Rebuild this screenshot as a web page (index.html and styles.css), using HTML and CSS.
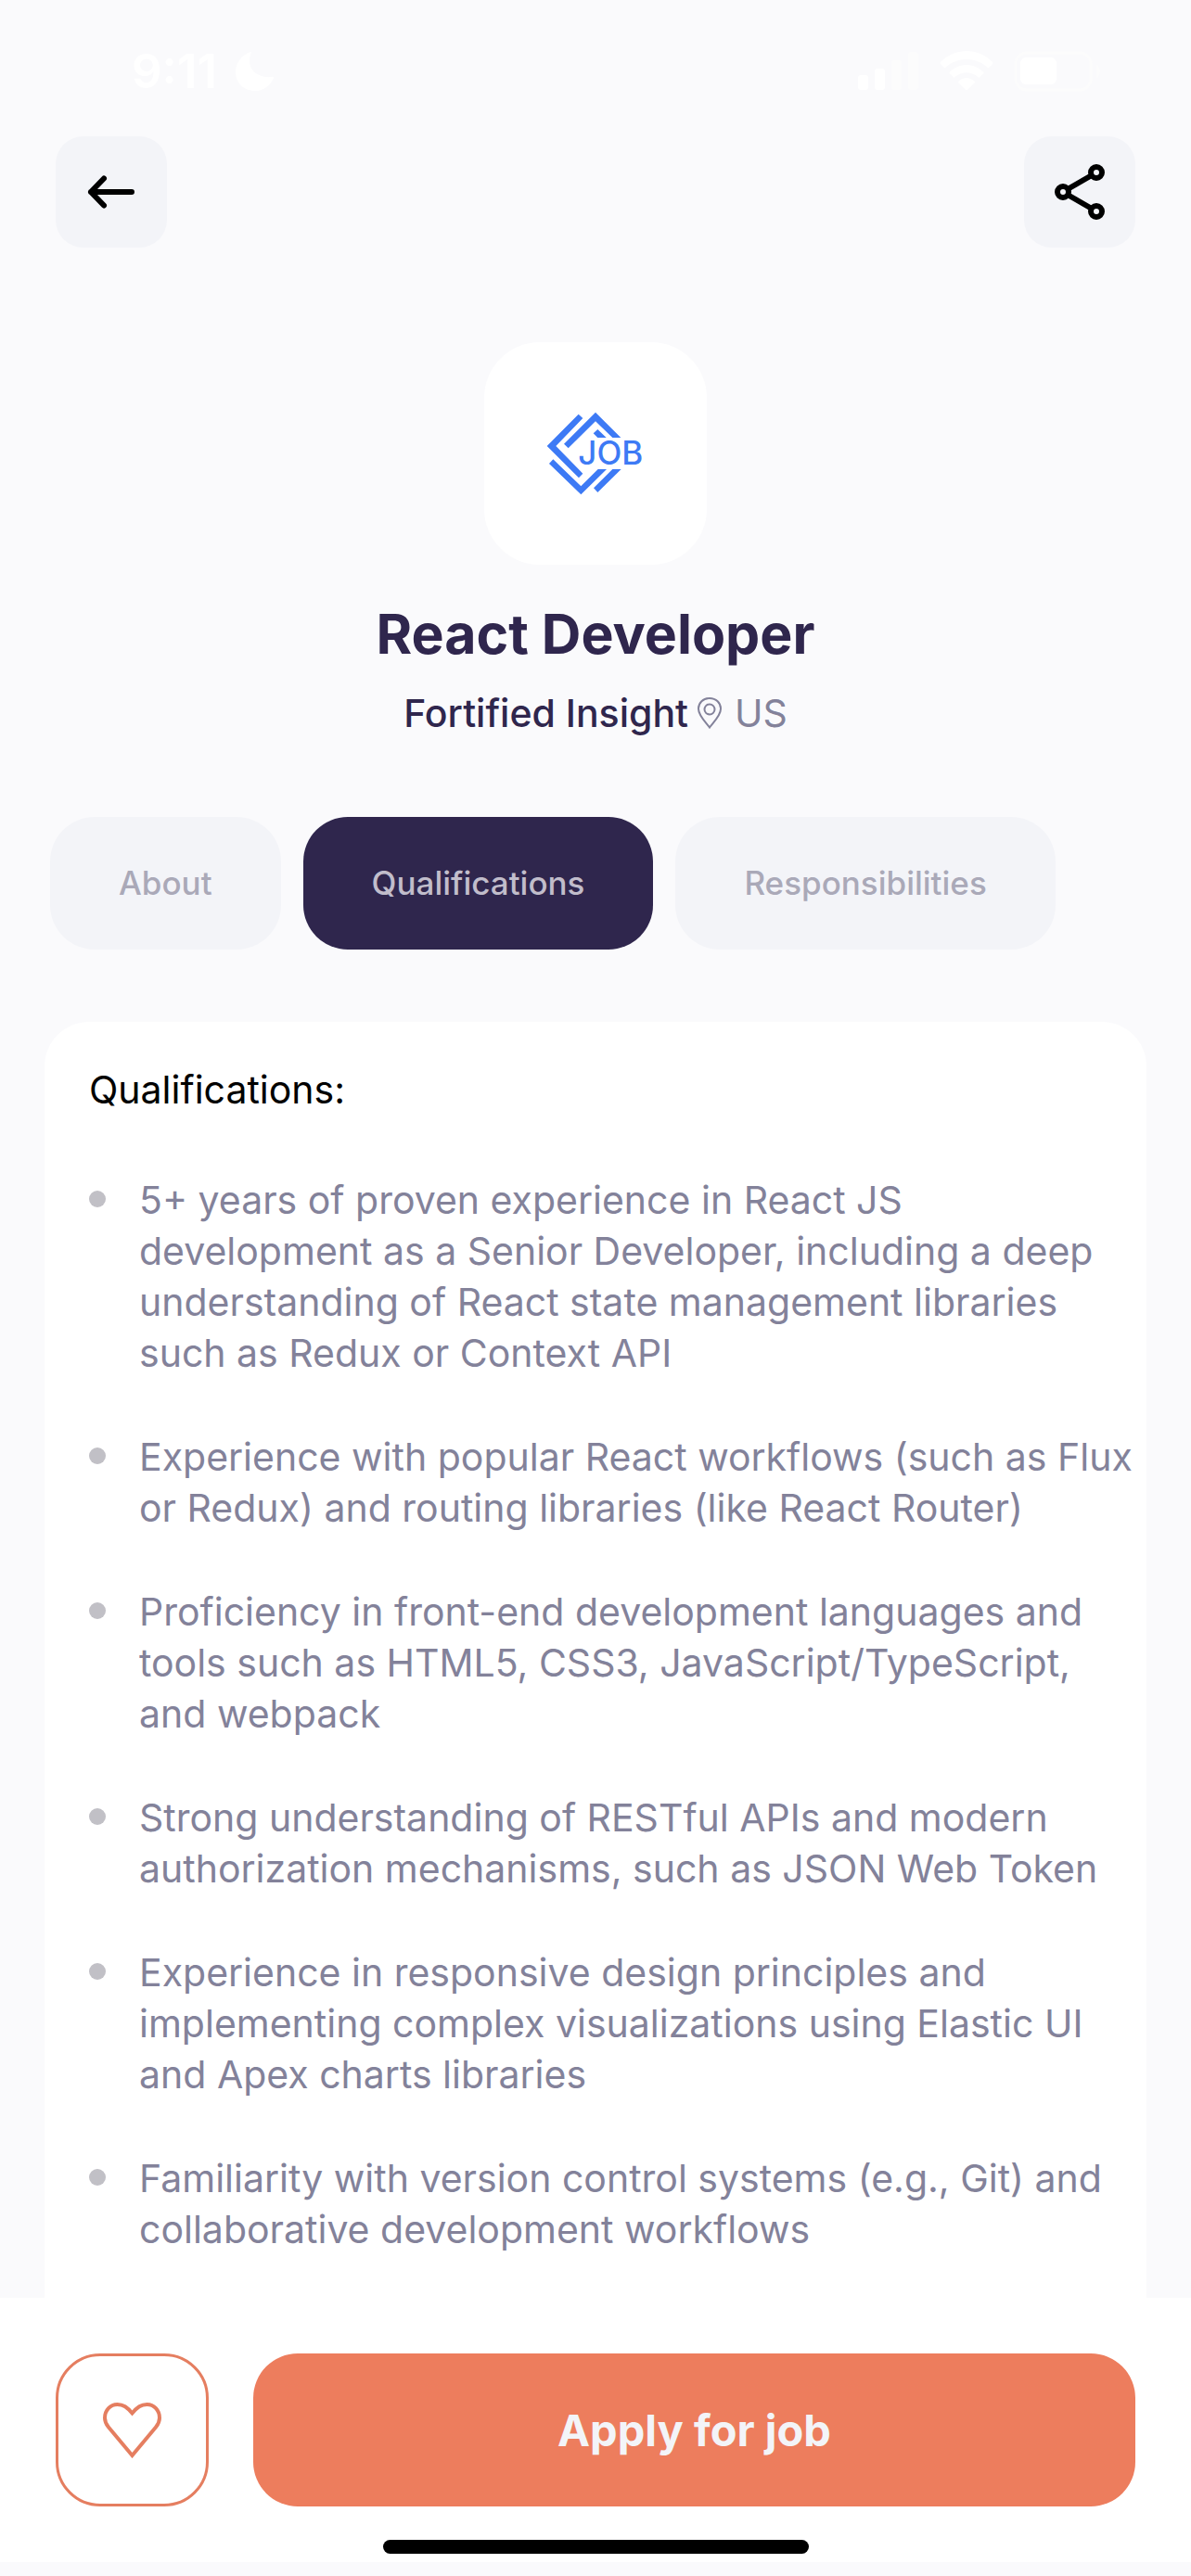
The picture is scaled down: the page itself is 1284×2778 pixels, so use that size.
FILE: index.html
```html
<!DOCTYPE html>
<html lang="en">
<head>
  <meta charset="utf-8">
  <meta name="viewport" content="width=device-width, initial-scale=1">
  <title>React Developer</title>
  <link rel="stylesheet" href="styles.css">
</head>
<body>
  <div class="status-bar">
    <div class="status-left">
      <span class="clock">9:11</span>
      <svg class="moon" width="42" height="42" viewBox="0 0 42 42" aria-hidden="true">
        <path d="M16 0C5 4 0 13 0 22c0 11 9 20 21 20 9 0 17-6 20-14 .3-1-.2-1.400-1-1.200C26 29 15 21 15 10c0-4 .6-6 1.500-8.500C17 .4 16.800-.2 16 0z"/>
      </svg>
    </div>
    <div class="status-right">
      <svg width="66" height="44" viewBox="0 0 66 44" aria-hidden="true">
        <rect x="0" y="26" width="11" height="16" rx="3"/>
        <rect x="18" y="19" width="11" height="23" rx="3"/>
        <rect class="faint" x="36" y="10" width="11" height="32" rx="3"/>
        <rect class="faint" x="54" y="1" width="11" height="41" rx="3"/>
      </svg>
      <svg width="58" height="44" viewBox="0 0 58 44" aria-hidden="true">
        <path d="M1 12C16-4 42-4 57 12c.6.7.6 1.300 0 2l-3.500 3.500c-.7.700-1.500.700-2.200 0C39 6 19 6 6.700 17.500c-.7.700-1.500.700-2.200 0L1 14c-.6-.7-.6-1.300 0-2z"/>
        <path d="M11 22.500c10-10 26-10 36 0 .6.700.6 1.300 0 2L43.500 28c-.7.700-1.400.700-2.100 0-7-6.500-17.800-6.500-24.800 0-.7.700-1.400.700-2.100 0L11 24.500c-.6-.7-.6-1.300 0-2z"/>
        <path d="M20.500 32.500c5-4.700 12-4.700 17 0 .6.600.6 1.200 0 1.900l-7.500 7.300c-.7.700-1.300.700-2 0l-7.500-7.300c-.6-.7-.6-1.300 0-1.900z"/>
      </svg>
      <svg width="94" height="44" viewBox="0 0 94 44" aria-hidden="true">
        <rect class="faint-line" x="2" y="2" width="81" height="40" rx="12"/>
        <rect x="7" y="7" width="39" height="29" rx="6"/>
        <path class="faint" d="M89 15c5 2 5 12 0 14z"/>
      </svg>
    </div>
  </div>

  <header class="top-bar">
    <button class="icon-button" type="button" aria-label="Back">
      <svg width="120" height="120" viewBox="0 0 120 120" aria-hidden="true">
        <path class="arrow" d="M82 60H38M52 45.500L38 60l14 14.500"/>
      </svg>
    </button>
    <button class="icon-button" type="button" aria-label="Share">
      <svg width="120" height="120" viewBox="0 0 120 120" aria-hidden="true">
        <path class="share-line" d="M73 42L47 57M73 78L47 63"/>
        <g class="share-node">
          <circle cx="42" cy="60" r="6"/>
          <circle cx="78" cy="39" r="6"/>
          <circle cx="78" cy="81" r="6"/>
        </g>
      </svg>
    </button>
  </header>

  <main class="content">
    <section class="job">
      <svg class="logo" width="240" height="240" viewBox="0 0 720 720" role="img" aria-label="Job logo">
        <g transform="translate(-66 -57)">
          <path d="M371 290l14 13-87 90 87 89-13 14-103-103z"/>
          <path d="M426 284l82 82h-27l-55-53-88 87-14-14z"/>
          <path d="M433 339l28 27h-28l-14-14z"/>
          <path d="M289 436l90 87 55-55h28l-83 82-103-100z"/>
          <path d="M481 468h28l-76 75-13-14z"/>
          <text x="370" y="453">JOB</text>
        </g>
      </svg>
      <h1 class="job-title">React Developer</h1>
      <p class="job-meta">
        <span class="company">Fortified Insight</span>
        <svg class="pin" width="26" height="34" viewBox="0 0 26 34" aria-hidden="true">
          <path d="M13 32.500C10 28 1 20 1 12.500 1 6 6 1 13 1s12 5 12 11.500C25 20 16 28 13 32.500z"/>
          <circle cx="13" cy="13" r="5.500"/>
        </svg>
        <span class="place">US</span>
      </p>
    </section>

    <nav class="tabs" aria-label="Job details">
      <button class="tab" type="button">About</button>
      <button class="tab tab-active" type="button" aria-current="true">Qualifications</button>
      <button class="tab" type="button">Responsibilities</button>
    </nav>

    <section class="card">
      <h2 class="card-title">Qualifications:</h2>
      <ul class="points">
        <li>5+ years of proven experience in React JS development as a Senior Developer, including a deep understanding of React state management libraries such as Redux or Context API</li>
        <li>Experience with popular React workflows (such as Flux or Redux) and routing libraries (like React Router)</li>
        <li>Proficiency in front-end development languages and tools such as HTML5, CSS3, JavaScript/TypeScript, and webpack</li>
        <li>Strong understanding of RESTful APIs and modern authorization mechanisms, such as JSON Web Token</li>
        <li>Experience in responsive design principles and implementing complex visualizations using Elastic UI and Apex charts libraries</li>
        <li>Familiarity with version control systems (e.g., Git) and collaborative development workflows</li>
      </ul>
    </section>
  </main>

  <footer class="action-bar">
    <div class="actions">
      <button class="like-button" type="button" aria-label="Save job">
        <svg width="63" height="60" viewBox="0 0 63 60" aria-hidden="true">
          <path d="M31.500 57L6 26.500C3.500 23.500 2 20.500 2 16.500 2 8 8 2 15.500 2 22 2 26 5 31.500 11.500 37 5 41 2 47.500 2 55 2 61 8 61 16.500c0 4-1.500 7-4 10z"/>
        </svg>
      </button>
      <button class="apply-button" type="button">Apply for job</button>
    </div>
    <div class="home-indicator"></div>
  </footer>
</body>
</html>
```
FILE: styles.css
```css
:root {
  --page: #fafafc;
  --soft: #f3f4f8;
  --ink: #2f264d;
  --muted: #83829a;
  --muted-light: #aaa9b8;
  --accent: #ed7d5d;
}

* {
  box-sizing: border-box;
}

body {
  margin: 0;
  height: 100vh;
  display: flex;
  flex-direction: column;
  background: var(--page);
  color: var(--ink);
  font-family: Inter, "Liberation Sans", sans-serif;
}

h1, h2, p, ul {
  margin: 0;
  padding: 0;
}

button {
  margin: 0;
  padding: 0;
  border: 0;
  font: inherit;
  cursor: pointer;
}

svg {
  display: block;
  flex: none;
}

/* Status bar */
.status-bar {
  flex: none;
  display: flex;
  justify-content: space-between;
  align-items: center;
  padding: 47px 97px 40px 142px;
  color: #fff;
}

.status-bar svg {
  fill: currentColor;
}

.status-bar .faint {
  fill: #fcfcfc;
}

.status-bar .faint-line {
  fill: none;
  stroke: #fcfcfc;
  stroke-width: 3;
}

.status-left {
  display: flex;
  align-items: center;
  gap: 20px;
}

.status-right {
  display: flex;
  align-items: center;
  gap: 22px;
}

.clock {
  font-size: 51px;
  line-height: 60px;
  font-weight: 600;
}

/* Header buttons */
.top-bar {
  flex: none;
  display: flex;
  justify-content: space-between;
  padding: 0 60px;
}

.icon-button {
  border-radius: 30px;
  background: var(--soft);
}

.arrow {
  fill: none;
  stroke: #000;
  stroke-width: 6;
  stroke-linecap: round;
  stroke-linejoin: round;
}

.share-line {
  stroke: #000;
  stroke-width: 6;
}

.share-node {
  fill: var(--soft);
  stroke: #000;
  stroke-width: 6;
}

/* Scrolling content */
.content {
  flex: 1;
  min-height: 0;
  overflow-y: auto;
  scrollbar-width: none;
  padding-top: 102px;
}

.job {
  display: flex;
  flex-direction: column;
  align-items: center;
}

.logo {
  border-radius: 60px;
  background: #fff;
  fill: #3d7af5;
}

.logo text {
  font-size: 105px;
  font-weight: 500;
}

.job-title {
  margin-top: 39px;
  font-size: 59px;
  line-height: 72px;
  font-weight: 700;
}

.job-meta {
  display: flex;
  align-items: center;
  margin-top: 24px;
  font-size: 41px;
  line-height: 50px;
}

.company {
  font-weight: 500;
}

.pin {
  margin: 0 14px 0 10px;
  fill: none;
  stroke: var(--muted);
  stroke-width: 2;
}

.place {
  color: var(--muted);
}

/* Tabs */
.tabs {
  display: flex;
  gap: 24px;
  margin-top: 87px;
  padding: 0 54px;
}

.tab {
  padding: 50px 74px;
  border-radius: 48px;
  background: var(--soft);
  color: var(--muted-light);
  font-size: 35px;
  line-height: 43px;
  font-weight: 500;
}

.tab-active {
  background: var(--ink);
  color: #c1bdcb;
}

/* Qualifications card */
.card {
  margin: 78px 48px 0;
  padding: 48px 12px 96px 48px;
  border-radius: 48px;
  background: #fff;
}

.card-title {
  color: #000;
  font-size: 41px;
  line-height: 50px;
  font-weight: 400;
}

.points {
  display: flex;
  flex-direction: column;
  gap: 57px;
  margin-top: 67px;
  list-style: none;
  color: var(--muted);
  font-size: 41px;
  line-height: 55px;
}

.points li {
  display: grid;
  grid-template-columns: 18px 1fr;
  column-gap: 36px;
}

.points li::before {
  content: "";
  width: 18px;
  height: 18px;
  margin-top: 17px;
  border-radius: 50%;
  background: #c1c0c6;
}

/* Bottom actions */
.action-bar {
  flex: none;
  margin-bottom: 15px;
  padding: 60px 60px 9px;
  background: #fff;
}

.actions {
  display: flex;
  gap: 48px;
}

.like-button {
  display: flex;
  align-items: center;
  justify-content: center;
  width: 165px;
  height: 165px;
  border: 3px solid #e57e60;
  border-radius: 48px;
  background: #fff;
}

.like-button svg {
  fill: none;
  stroke: #e57e60;
  stroke-width: 4;
}

.apply-button {
  flex: 1;
  border-radius: 48px;
  background: var(--accent);
  color: var(--soft);
  font-size: 47px;
  font-weight: 700;
}

.home-indicator {
  width: 459px;
  height: 15px;
  margin: 36px auto 0;
  border-radius: 8px;
  background: #000;
}
```
